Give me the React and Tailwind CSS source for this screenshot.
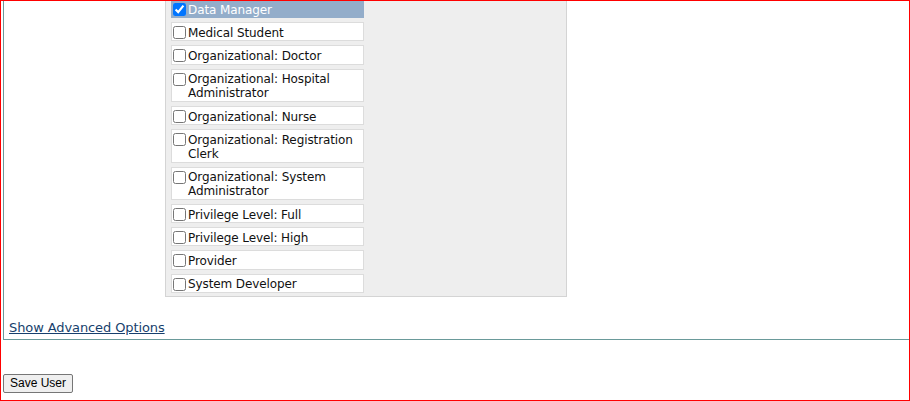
import React from "react";

const roles = [
  { name: "Data Manager", checked: true },
  { name: "Medical Student" },
  { name: "Organizational: Doctor" },
  { name: "Organizational: Hospital Administrator" },
  { name: "Organizational: Nurse" },
  { name: "Organizational: Registration Clerk" },
  { name: "Organizational: System Administrator" },
  { name: "Privilege Level: Full" },
  { name: "Privilege Level: High" },
  { name: "Provider" },
  { name: "System Developer" },
];

function RoleRow({ name, checked }) {
  return (
    <label
      className={
        "flex items-start w-[193px] border pt-[2.5px] pb-[0.5px] text-[12px] leading-[14.2px] tracking-[-0.1px] " +
        (checked
          ? "bg-[#93adca] border-[#93adca] text-white"
          : "bg-white border-[#dcdcdc] text-[#111]")
      }
    >
      <input
        type="checkbox"
        defaultChecked={!!checked}
        className="m-0 ml-[1px] mr-[2px] mt-[0.5px] w-[13px] h-[13px] shrink-0"
      />
      <span>{name}</span>
    </label>
  );
}

export default function App() {
  return (
    <div
      className="w-[910px] h-[401px] border border-[#ff0000] overflow-hidden bg-white"
      style={{ fontFamily: '"DejaVu Sans", Verdana, sans-serif' }}
    >
      <div className="ml-[2px] border-l border-b border-[#6a9a9a]">
        <div className="ml-[161px] -mt-[2px] w-[402px] bg-[#eeeeee] border border-t-0 border-[#d4d4d4] pl-[5px] pb-[3px] flex flex-col gap-[4px]">
          {roles.map((r) => (
            <RoleRow key={r.name} {...r} />
          ))}
        </div>
        <div className="mt-[23px] pl-[5px] pb-[3px] text-[13px] leading-[16px] tracking-[-0.1px]">
          <a href="#" className="underline text-[#173f6d]">
            Show Advanced Options
          </a>
        </div>
      </div>
      <button
        className="ml-[2px] mt-[34px] px-[6px] py-[1px] border border-[#767676] rounded-[2px] bg-[#efefef] text-black text-[12px] leading-[15px]"
        style={{ fontFamily: '"Liberation Sans", Arial, sans-serif' }}
      >
        Save User
      </button>
    </div>
  );
}
